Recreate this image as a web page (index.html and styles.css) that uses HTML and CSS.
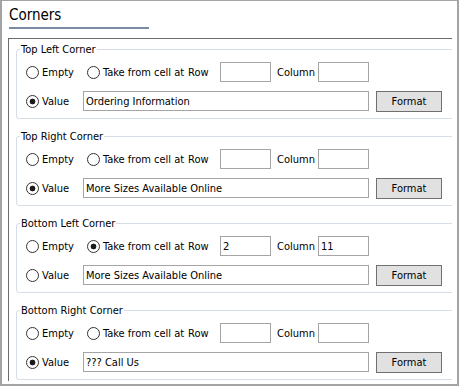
FILE: index.html
```html
<!DOCTYPE html>
<html>
<head>
<meta charset="utf-8">
<link rel="stylesheet" href="styles.css">
</head>
<body>
<div class="window">
  <div class="title">Corners</div>
  <div class="panel">
    <fieldset class="group">
      <legend>Top Left Corner</legend>
      <div class="rows">
        <div class="row">
          <label class="opt opt-empty"><input type="radio" name="tl"><span>Empty</span></label>
          <label class="opt opt-take"><input type="radio" name="tl"><span>Take from cell at</span></label>
          <span class="lbl lbl-row">Row</span>
          <input class="field field-small" type="text" value="">
          <span class="lbl lbl-col">Column</span>
          <input class="field field-small" type="text" value="">
        </div>
        <div class="row">
          <label class="opt opt-value"><input type="radio" name="tl" checked><span>Value</span></label>
          <input class="field field-wide" type="text" value="Ordering Information">
          <button class="btn">Format</button>
        </div>
      </div>
    </fieldset>
    <fieldset class="group">
      <legend>Top Right Corner</legend>
      <div class="rows">
        <div class="row">
          <label class="opt opt-empty"><input type="radio" name="tr"><span>Empty</span></label>
          <label class="opt opt-take"><input type="radio" name="tr"><span>Take from cell at</span></label>
          <span class="lbl lbl-row">Row</span>
          <input class="field field-small" type="text" value="">
          <span class="lbl lbl-col">Column</span>
          <input class="field field-small" type="text" value="">
        </div>
        <div class="row">
          <label class="opt opt-value"><input type="radio" name="tr" checked><span>Value</span></label>
          <input class="field field-wide" type="text" value="More Sizes Available Online">
          <button class="btn">Format</button>
        </div>
      </div>
    </fieldset>
    <fieldset class="group">
      <legend>Bottom Left Corner</legend>
      <div class="rows">
        <div class="row">
          <label class="opt opt-empty"><input type="radio" name="bl"><span>Empty</span></label>
          <label class="opt opt-take"><input type="radio" name="bl" checked><span>Take from cell at</span></label>
          <span class="lbl lbl-row">Row</span>
          <input class="field field-small" type="text" value="2">
          <span class="lbl lbl-col">Column</span>
          <input class="field field-small" type="text" value="11">
        </div>
        <div class="row">
          <label class="opt opt-value"><input type="radio" name="bl"><span>Value</span></label>
          <input class="field field-wide" type="text" value="More Sizes Available Online">
          <button class="btn">Format</button>
        </div>
      </div>
    </fieldset>
    <fieldset class="group">
      <legend>Bottom Right Corner</legend>
      <div class="rows">
        <div class="row">
          <label class="opt opt-empty"><input type="radio" name="br"><span>Empty</span></label>
          <label class="opt opt-take"><input type="radio" name="br"><span>Take from cell at</span></label>
          <span class="lbl lbl-row">Row</span>
          <input class="field field-small" type="text" value="">
          <span class="lbl lbl-col">Column</span>
          <input class="field field-small" type="text" value="">
        </div>
        <div class="row">
          <label class="opt opt-value"><input type="radio" name="br" checked><span>Value</span></label>
          <input class="field field-wide" type="text" value="??? Call Us">
          <button class="btn">Format</button>
        </div>
      </div>
    </fieldset>
  </div>
</div>
</body>
</html>
```
FILE: styles.css
```css
* { box-sizing: border-box; }
html, body { margin: 0; padding: 0; background: #fff; }
body {
  font-family: "DejaVu Sans Condensed", "DejaVu Sans", "Liberation Sans", sans-serif;
  font-stretch: condensed;
  font-size: 11px;
  color: #000;
}
.window {
  width: 459px;
  height: 386px;
  border: 2px solid #a3a3a3;
  border-top-width: 1px;
  overflow: hidden;
}
.title {
  margin-left: 7px;
  width: 140px;
  padding: 5px 0 3px;
  font-size: 15px;
  line-height: 18px;
  border-bottom: 2px solid #7c8ba5;
}
.panel {
  margin: 9px 0 0 6px;
  width: 444px;
  height: 343px;
  border-top: 1px solid #6b6b6b;
  border-left: 1px solid #6b6b6b;
  overflow: hidden;
  padding: 4px 0 0 7px;
  display: flex;
  flex-direction: column;
  gap: 11px;
}
.group {
  margin: 0 -6px 0 0;
  border: 1px solid #d6dde6;
  border-radius: 3px;
  padding: 0 0 7px 3px;
  min-width: 0;
}
.group legend {
  padding: 0 1px;
  font-size: 11px;
  line-height: 13px;
}
.rows {
  padding: 6px 0 0 6px;
  display: flex;
  flex-direction: column;
  gap: 9px;
}
.row {
  display: flex;
  align-items: center;
  height: 20px;
}
.opt {
  display: flex;
  align-items: center;
  gap: 3px;
  white-space: nowrap;
}
.opt input {
  -webkit-appearance: none;
  appearance: none;
  width: 13px;
  height: 13px;
  margin: 0;
  border: 1px solid #333;
  border-radius: 50%;
  background: #fff;
  flex: none;
}
.opt input:checked {
  background: radial-gradient(circle, #1a1a1a 0 2.6px, #fff 3.2px);
}
.opt-empty { width: 61px; }
.opt-take { width: 101px; }
.opt-value { width: 57px; }
.lbl { white-space: nowrap; }
.lbl-row { width: 32px; }
.lbl-col { width: 41px; margin-left: 6px; }
.field {
  height: 20px;
  margin: 0;
  border: 1px solid #a5a5a5;
  padding: 0 2px;
  font: inherit;
  color: #000;
  background: #fff;
  outline: none;
}
.field-small { width: 51px; }
.field-wide { width: 286px; }
.btn {
  margin: 0 0 0 7px;
  width: 66px;
  height: 21px;
  border: 1px solid #707070;
  background: #e1e1e1;
  font: inherit;
  color: #000;
  padding: 0;
}
```
